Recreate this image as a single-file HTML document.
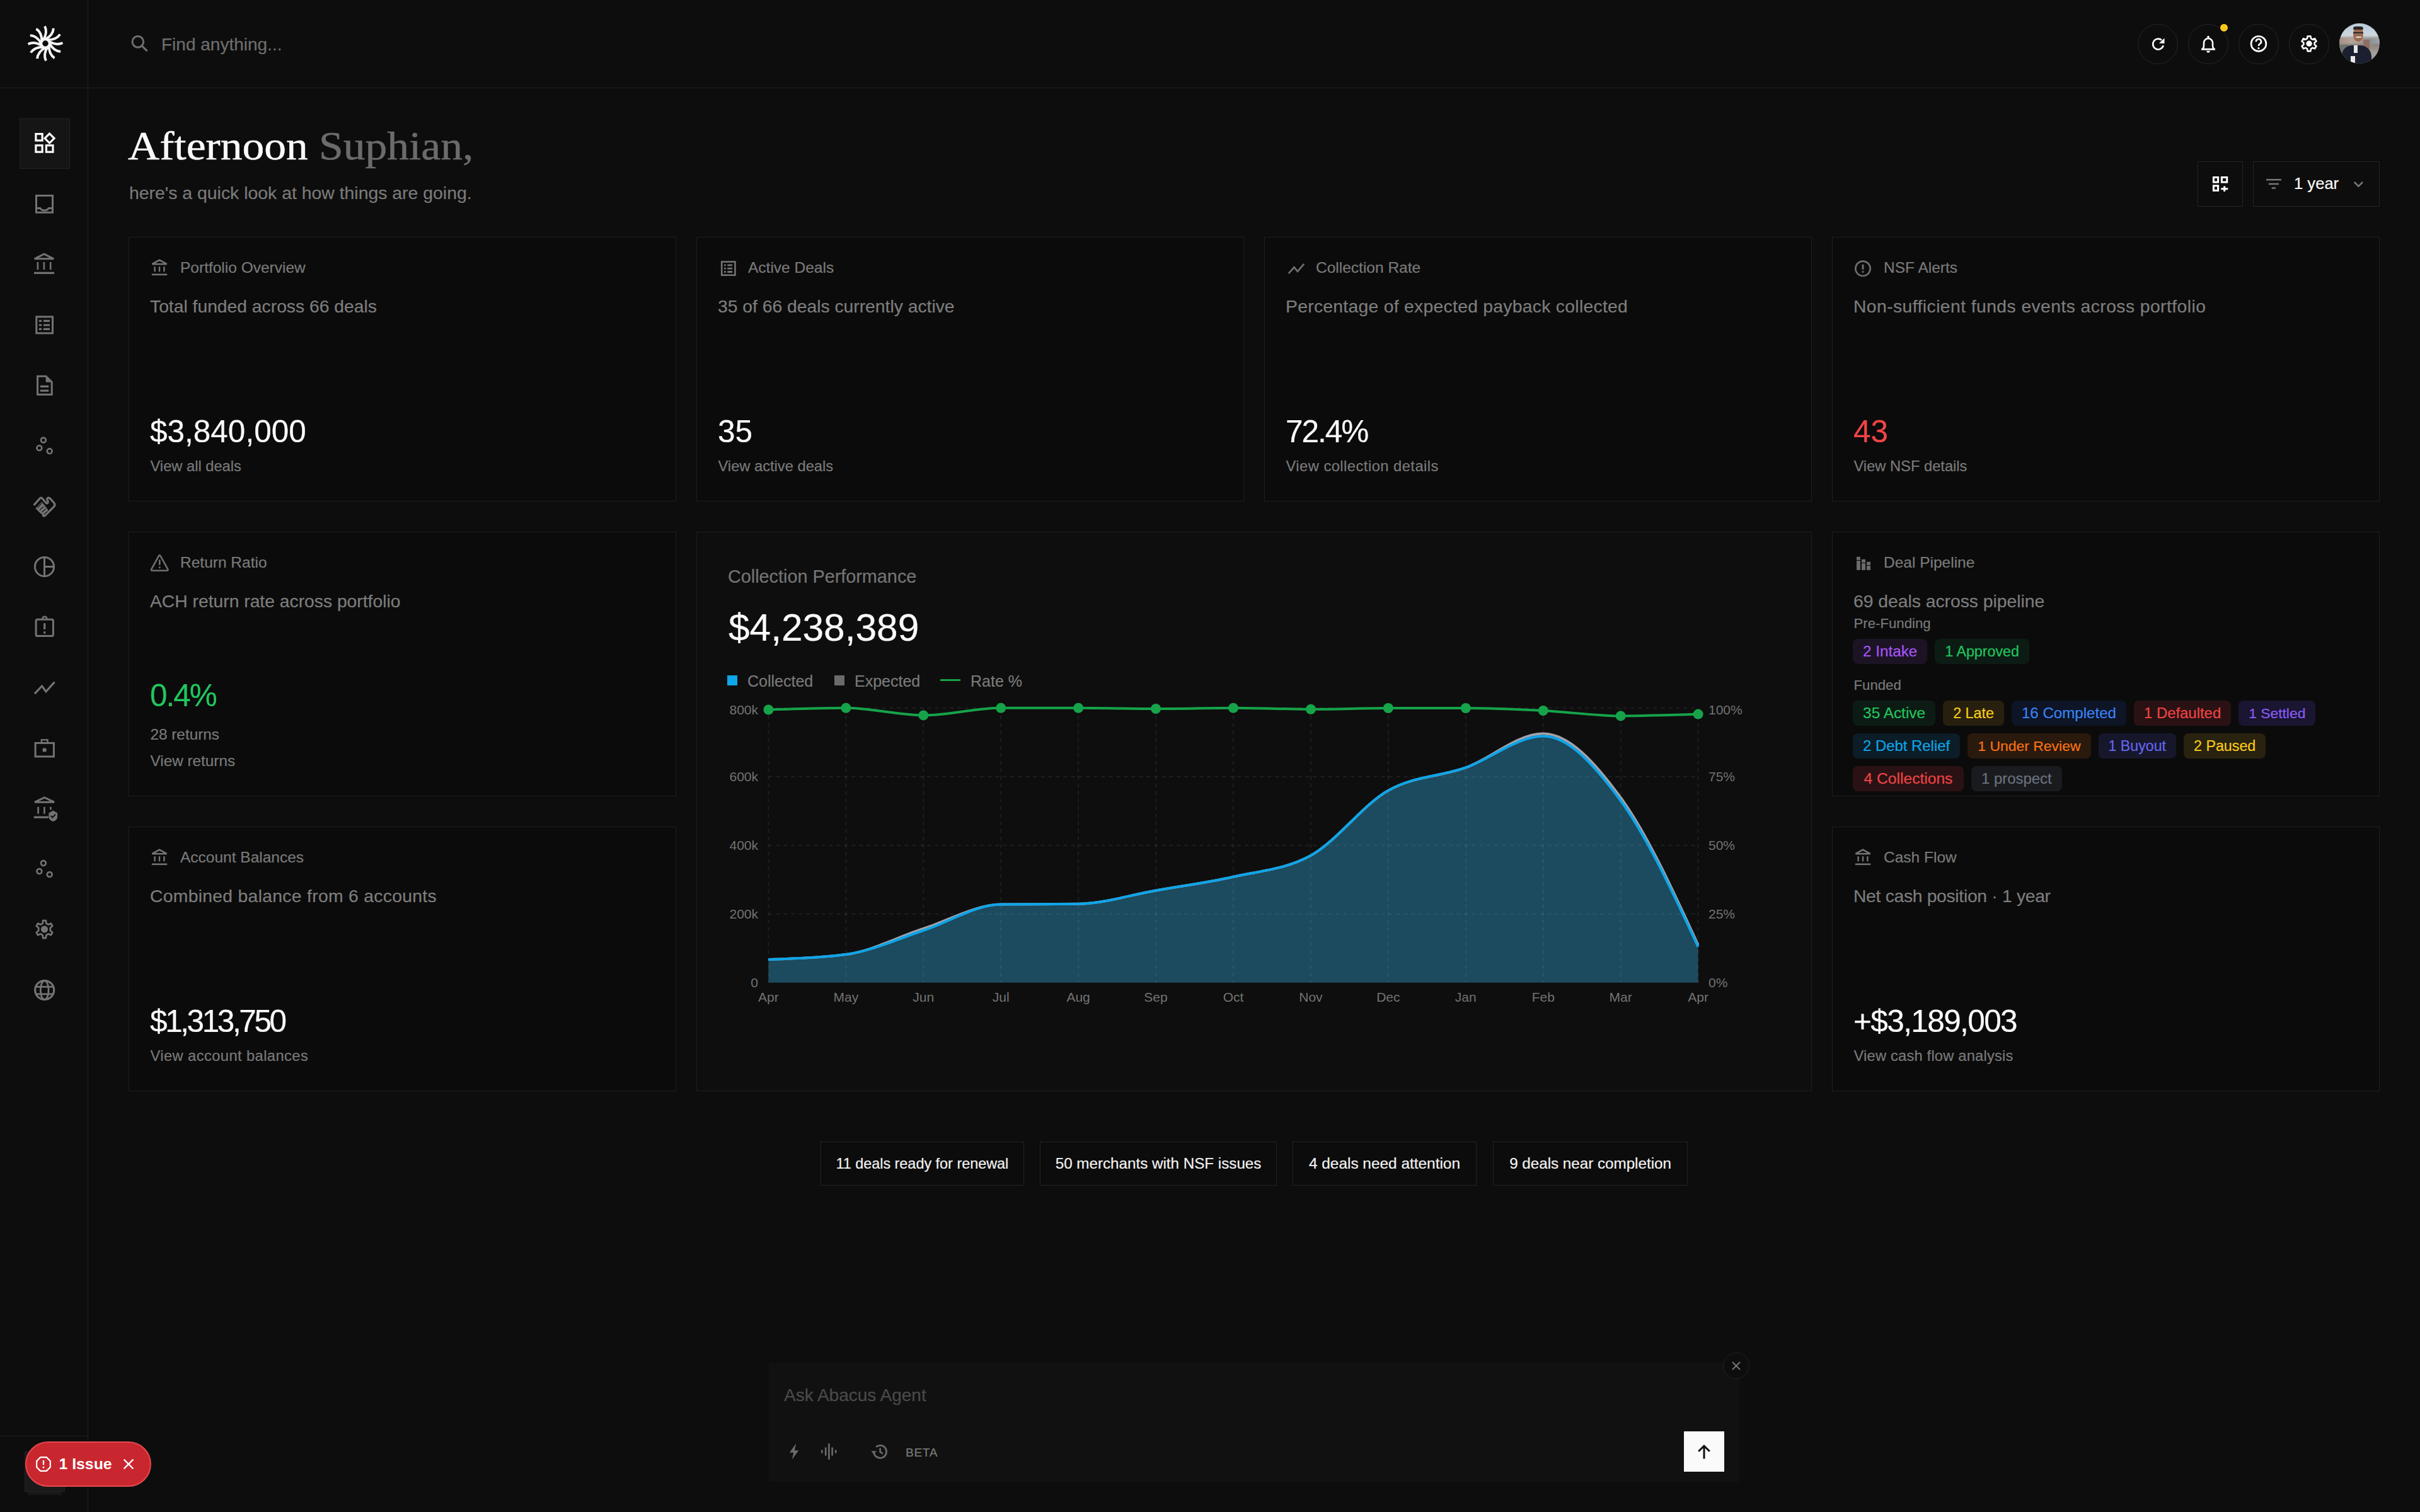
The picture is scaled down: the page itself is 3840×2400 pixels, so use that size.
<!DOCTYPE html>
<html><head><meta charset="utf-8">
<style>
html,body{margin:0;padding:0;background:#0d0d0d;overflow:hidden;}
body{width:3840px;height:2400px;}
#root{zoom:2;-webkit-text-stroke:0.1px currentColor;width:1920px;height:1200px;position:relative;overflow:hidden;background:#0d0d0d;font-family:"Liberation Sans",sans-serif;color:#fafafa;}
.abs{position:absolute;}
.vline{position:absolute;left:69.5px;top:0;width:0.5px;height:1200px;background:#1f1f1f;}
.hline{position:absolute;left:0;top:69.5px;width:1920px;height:0.5px;background:#1f1f1f;}
.t{position:absolute;white-space:nowrap;line-height:1;}
svg{position:absolute;overflow:visible;}
@media (max-width:2500px){html,body{width:1920px;height:1200px}body{width:1920px;height:1200px}#root{zoom:1}}
.side svg{left:27.75px;width:16px;height:16px;}
.hbtn{position:absolute;top:19px;width:31px;height:31px;border:0.5px solid #262626;border-radius:50%;}
.card{position:absolute;box-sizing:border-box;border:0.5px solid #1f1f1f;background:#0b0b0b;}
.card .ic{position:absolute;left:16px;top:15.5px;width:16px;height:16px;}
.lbl{position:absolute;left:40.5px;top:0;font-size:12.25px;color:#7a7a7a;white-space:nowrap;line-height:1;}
.desc{position:absolute;left:16.5px;font-size:14.14px;color:#7d7d7d;white-space:nowrap;line-height:1;}
.val{position:absolute;left:16.5px;font-size:24.75px;color:#fafafa;white-space:nowrap;line-height:1;}
.lnk{position:absolute;left:16.75px;font-size:11.85px;color:#7a7a7a;white-space:nowrap;line-height:1;}
.badge{display:inline-block;box-sizing:border-box;height:20px;line-height:20px;padding:0;text-align:center;border-radius:4px;font-size:12px;margin-right:6px;vertical-align:top;white-space:nowrap;}
.pill{position:absolute;top:906px;height:35px;box-sizing:border-box;border:0.5px solid #232323;color:#f2f2f2;line-height:34px;padding:0;text-align:center;white-space:nowrap;background:#0c0c0c;}
</style></head>
<body><div id="root">

<!-- SIDEBAR / HEADER LINES -->
<div class="vline"></div>
<div class="hline"></div>

<!-- LOGO -->
<svg id="logo" style="left:21.9px;top:20.6px;width:28px;height:28px" viewBox="-14 -14 28 28"><path d="M-1.65 -2.86Q1.96 -8.90 -0.48 -13.69M0.00 -3.30Q6.15 -6.73 6.43 -12.10M1.65 -2.86Q8.69 -2.75 11.62 -7.26M2.86 -1.65Q8.90 1.96 13.69 -0.48M3.30 0.00Q6.73 6.15 12.10 6.43M2.86 1.65Q2.75 8.69 7.26 11.62M1.65 2.86Q-1.96 8.90 0.48 13.69M-0.00 3.30Q-6.15 6.73 -6.43 12.10M-1.65 2.86Q-8.69 2.75 -11.62 7.26M-2.86 1.65Q-8.90 -1.96 -13.69 0.48M-3.30 0.00Q-6.73 -6.15 -12.10 -6.43M-2.86 -1.65Q-2.75 -8.69 -7.26 -11.62" fill="none" stroke="#f5f5f5" stroke-width="1.95"/><circle cx="0" cy="0" r="3.35" fill="none" stroke="#f5f5f5" stroke-width="2"/></svg>

<!-- SEARCH -->
<svg style="left:102px;top:26px;width:18px;height:18px" viewBox="0 0 18 18"><circle cx="7.4" cy="7.2" r="4.4" fill="none" stroke="#6e6e6e" stroke-width="1.5"/><line x1="10.6" y1="10.4" x2="14.8" y2="14.6" stroke="#6e6e6e" stroke-width="1.6"/></svg>
<div class="t" style="left:128px;top:28.5px;font-size:14px;color:#6e6e6e">Find anything...</div>

<!-- HEADER RIGHT -->
<div class="hbtn" style="left:1696px"></div>
<div class="hbtn" style="left:1736px"></div>
<div class="hbtn" style="left:1776px"></div>
<div class="hbtn" style="left:1816px"></div>
<svg style="left:1704px;top:27px;width:16px;height:16px" viewBox="0 0 16 16"><path d="M11 4.78A4.2 4.2 0 1 0 12.36 9.09" fill="none" stroke="#fff" stroke-width="1.3"/><path d="M9 7.3L13.25 3.25V7.5Z" fill="#fff"/></svg>
<svg style="left:1744px;top:27px;width:16px;height:16px" viewBox="0 0 16 16"><path d="M3.5 11.7Q4.5 10.9 4.5 9.2V7A3.5 3.5 0 0 1 11.5 7V9.2Q11.5 10.9 12.5 11.7" fill="none" stroke="#fff" stroke-width="1.3"/><path d="M2.5 12.1H13.5" stroke="#fff" stroke-width="1.4"/><circle cx="8" cy="2.3" r="0.9" fill="#fff"/><path d="M6.6 13.4H9.4A1.4 1.4 0 0 1 6.6 13.4Z" fill="#fff"/></svg>
<div class="abs" style="left:1761.3px;top:19.2px;width:6px;height:6px;border-radius:50%;background:#f8c91c"></div>
<svg style="left:1784px;top:27px;width:16px;height:16px" viewBox="0 0 16 16"><circle cx="7.97" cy="7.7" r="5.95" fill="none" stroke="#fff" stroke-width="1.35"/><path d="M5.9 6.1A2.05 2.05 0 1 1 8.8 7.9C8.1 8.3 7.95 8.7 7.95 9.5" fill="none" stroke="#fff" stroke-width="1.3"/><circle cx="7.95" cy="11.3" r="0.8" fill="#fff"/></svg>
<svg style="left:1824px;top:27px;width:16px;height:16px" viewBox="0 0 16 16"><path d="M6.85 1.75H9.15L9.55 3.6L10.75 4.3L12.55 3.7L13.7 5.7L12.3 6.95V8.35L13.7 9.6L12.55 11.6L10.75 11L9.55 11.7L9.15 13.55H6.85L6.45 11.7L5.25 11L3.45 11.6L2.3 9.6L3.7 8.35V6.95L2.3 5.7L3.45 3.7L5.25 4.3L6.45 3.6Z" fill="none" stroke="#fff" stroke-width="1.3" stroke-linejoin="miter"/><circle cx="8" cy="7.65" r="2.35" fill="#fff"/></svg>
<div class="abs" style="left:1856px;top:18.5px;width:32px;height:32px;border-radius:50%;overflow:hidden;background:linear-gradient(180deg,#b9cadb 0%,#cdd6dd 30%,#a9a29b 36%,#8f8680 55%,#a6a29c 75%,#8c8a86 100%)">
 <div class="abs" style="left:0;top:12px;width:32px;height:4px;background:linear-gradient(90deg,#a58f86,#b7a49b 30%,#9a9590 60%,#8e949c 80%,#9ca3aa)"></div>
 <div class="abs" style="left:19px;top:13px;width:5px;height:11px;background:#8f6f63"></div>
 <div class="abs" style="left:0;top:17px;width:7px;height:8px;background:#6f7470"></div>
 <div class="abs" style="left:2px;top:17.5px;width:23.5px;height:16px;border-radius:8px 9px 0 0;background:#1b2030"></div>
 <div class="abs" style="left:11.6px;top:17.5px;width:2.8px;height:6px;background:#e6e6e6"></div>
 <div class="abs" style="left:9px;top:26px;width:3.5px;height:6px;background:#e8e8e8"></div>
 <div class="abs" style="left:11.2px;top:3px;width:7.6px;height:11.6px;border-radius:45% 45% 50% 50%;background:#9c6a50"></div>
 <div class="abs" style="left:11px;top:2.6px;width:8px;height:2.6px;border-radius:4px 4px 1px 1px;background:#2b2522"></div>
 <div class="abs" style="left:11.2px;top:7px;width:7.6px;height:0.8px;background:#2a2a2a"></div>
 <div class="abs" style="left:12.8px;top:10.4px;width:4.6px;height:1.3px;border-radius:1px;background:#e8e0d8"></div>
</div>


<!-- SIDEBAR ICONS -->
<div class="abs" style="left:15.5px;top:94px;width:40px;height:40px;box-sizing:border-box;background:#151515;border:0.5px solid #222"></div>
<svg style="left:0;top:0;width:70px;height:1200px" viewBox="0 0 70 1200">
<g fill="none" stroke="#fafafa" stroke-width="1.6">
<rect x="28.45" y="106.3" width="5.1" height="5.2"/><rect x="28.45" y="115.4" width="5.1" height="5.2"/><rect x="36.7" y="115.4" width="5.3" height="5.2"/>
<path d="M39.3 106.05L43.05 109.8L39.3 113.55L35.55 109.8Z"/>
</g>
<g fill="none" stroke="#737373" stroke-width="1.5">
<path d="M28.75 155.25H41.75V168.6H28.75Z"/><path d="M28.75 165.2H31.8Q33 167 35.25 167Q37.5 167 38.7 165.2H41.75"/>
<path d="M27.4 205.4H42.6L35 201.6Z" stroke-linejoin="miter"/><path d="M29.95 208V214M34.95 208V214M40.1 208V214" stroke-width="1.3"/><path d="M27 216.65H43" stroke-width="1.6"/>
<rect x="28.9" y="251.4" width="12.85" height="13.05"/><path d="M34.45 254.7H39.5M34.45 258H39.5M34.45 261.2H39.5M30.95 254.7H33.05M30.95 258H33.05M30.95 261.2H33.05" stroke-width="1.6"/>
<path d="M29.8 298.6H36.5L41.1 303.2V313.15H29.8Z"/><path d="M36.3 298.2V303.4H41.5Z" fill="#737373" stroke="none"/><path d="M31.95 306.65H38.6M31.95 310.1H38.6" stroke-width="1.6"/>
<g stroke-width="1.35"><circle cx="34.45" cy="349.25" r="1.95"/><circle cx="31.2" cy="355.55" r="1.95"/><circle cx="39.35" cy="358.05" r="1.95"/></g>
<path d="M26.83 400.94 L31.43 395.78 Q32.42 394.46 33.58 395.61 L36.22 398.76 Q37.38 400.24 38.04 398.92 Q38.37 397.60 37.05 396.44" stroke-linecap="butt" stroke-linejoin="round" stroke-width="1.65"/><path d="M37.05 396.44 Q37.88 394.46 39.53 395.45 L43.00 399.25 Q43.99 400.57 42.84 402.06 L35.73 409.17 Q34.90 410.00 34.07 409.01 L33.74 408.68" stroke-linejoin="round" stroke-width="1.65"/><path d="M28.20 403.38 L33.25 398.26 L38.21 404.71 L35.23 409.50 L33.08 408.18 L31.10 406.53 L29.44 404.87 Z" fill="#737373" stroke="none"/><path d="M29.61 402.97 L33.41 399.17 M31.51 404.79 L34.49 402.06 M33.25 406.53 L36.22 403.88 M35.07 408.26 L37.38 406.03" stroke="#0d0d0d" stroke-width="0.55"/>
<circle cx="35.25" cy="449.8" r="7.55"/><path d="M35.25 442.25V457.35M35.25 449.8H42.8"/>
<rect x="28.55" y="491.6" width="13.65" height="13.2" rx="1.2"/><path d="M33.6 491.6Q33.6 489.4 35.4 489.4Q37.2 489.4 37.2 491.6" stroke-width="1.3"/><path d="M35.35 494.6V499.5" stroke-width="1.6"/><path d="M35.35 501.1V502.9" stroke-width="1.6"/>
<path d="M27.5 550.55L33.25 544.5L36.5 548.9L43.25 541.3" stroke-width="1.6"/>
<rect x="28.05" y="589.7" width="14.65" height="10.75"/><rect x="32.95" y="587.15" width="4.8" height="2.5" stroke-width="1.2"/>
<path d="M27.6 636.6H43L35.3 632.9Z"/><path d="M30.3 640.4V645.9M35.2 640.4V645.9M40.2 640.4V642.6" stroke-width="1.3"/><path d="M26.85 648.6H38.4" stroke-width="1.6"/>
<g stroke-width="1.35"><circle cx="34.45" cy="685" r="1.95"/><circle cx="31.2" cy="691.5" r="1.95"/><circle cx="39.35" cy="694" r="1.95"/></g>
<path d="M34.1 730.6H36.4L36.7 732.9L38.3 733.8L40.4 732.9L41.6 734.9L39.9 736.4V738.6L41.6 740.1L40.4 742.1L38.3 741.2L36.7 742.1L36.4 744.5H34.1L33.8 742.1L32.2 741.2L30.1 742.1L28.9 740.1L30.6 738.6V736.4L28.9 734.9L30.1 732.9L32.2 733.8L33.8 732.9Z" stroke-width="1.4" stroke-linejoin="round"/>
<circle cx="35.35" cy="785.8" r="7.5" stroke-width="1.6"/><ellipse cx="35.35" cy="785.8" rx="3.2" ry="7.5" stroke-width="1.4"/><path d="M28.2 783.15H42.5M28.2 788.9H42.5" stroke-width="1.4"/>
</g>
<g fill="#737373"><circle cx="35.3" cy="595.2" r="1.6"/><circle cx="35.25" cy="737.5" r="2.8"/>
<path d="M38.7 645.2L42.1 643.2L45.55 645.2V648.2Q45.55 650.9 42.1 652Q38.7 650.9 38.7 648.2Z"/></g>
<path d="M40.3 647.4L41.7 648.8L44 646.3" fill="none" stroke="#0d0d0d" stroke-width="0.9"/>
<path d="M0 1139.75H69.5" stroke="#1f1f1f" stroke-width="0.5"/>
</svg>
<div class="abs" style="left:22px;top:1183.8px;width:27px;height:2.6px;background:#181818"></div>
<div class="abs" style="left:19.5px;top:1152px;width:32px;height:32px;background:#1a1a1a;border:0.5px solid #222;box-sizing:border-box"></div>


<!-- GREETING -->
<div class="t" style="left:101.5px;top:96px;font-family:'Liberation Serif',serif;font-size:31.6px;color:#fafafa;line-height:40px;transform:scaleX(1.1);transform-origin:0 0;-webkit-text-stroke:0.25px currentColor">Afternoon <span style="color:#6b6b6b;-webkit-text-stroke:0.25px #6b6b6b">Suphian,</span></div>
<div class="t" style="left:102.5px;top:145px;font-size:14.2px;color:#7a7a7a;line-height:16px">here's a quick look at how things are going.</div>
<div class="abs" style="left:1743.5px;top:128px;width:36px;height:36px;box-sizing:border-box;border:0.5px solid #232323"></div>
<svg style="left:1753.5px;top:138px;width:16px;height:16px" viewBox="0 0 16 16"><g fill="none" stroke="#fff" stroke-width="1.5"><rect x="2.7" y="2.75" width="3.6" height="3.8"/><rect x="9.2" y="2.75" width="4.15" height="3.8"/><rect x="2.7" y="9.45" width="3.6" height="3.75"/><path d="M11.35 9.75V13.95M8.65 11.85H14.1"/></g></svg>
<div class="abs" style="left:1787.5px;top:128px;width:100.5px;height:36px;box-sizing:border-box;border:0.5px solid #232323"></div>
<svg style="left:1797px;top:138px;width:16px;height:16px" viewBox="0 0 16 16"><path d="M0.95 4.6H12.95M2.9 8H10.95M5.35 11.3H8.5" stroke="#767676" stroke-width="1.25"/></svg>
<div class="t" style="left:1820px;top:139.5px;font-size:12.8px;color:#fafafa">1 year</div>
<svg style="left:1864px;top:140px;width:12px;height:12px" viewBox="0 0 12 12"><path d="M3.9 4.5L7.2 7.8L10.5 4.5" fill="none" stroke="#767676" stroke-width="1.3"/></svg>


<!-- CARDS -->
<div class="card" style="left:102px;top:188px;width:434.5px;height:210px"><svg class="ic" viewBox="0 0 16 16"><g fill="none" stroke="#737373" stroke-width="1.3"><path d="M2.2 5.6H13.8L8 2.4Z" stroke-linejoin="miter"/><path d="M4.3 7.6V11.6M8 7.6V11.6M11.7 7.6V11.6" stroke-width="1.2"/><path d="M1.9 13.9H14.1" stroke-width="1.3"/></g></svg><div class="lbl" style="top:18.1px">Portfolio Overview</div><div class="desc" style="top:47.5px">Total funded across 66 deals</div><div class="val" style="top:141.4px;color:#fafafa">$3,840,000</div><div class="lnk" style="top:176px">View all deals</div></div>
<div class="card" style="left:552.5px;top:188px;width:434.5px;height:210px"><svg class="ic" viewBox="0 0 16 16"><g fill="none" stroke="#737373"><rect x="3.6" y="3.75" width="10.6" height="10.6" stroke-width="1.3"/><path d="M5.5 6.45H6.9M5.5 9.1H6.9M5.5 11.75H6.9M8.1 6.45H12.05M8.1 9.1H12.05M8.1 11.75H12.05" stroke-width="1.4"/></g></svg><div class="lbl" style="top:18.1px">Active Deals</div><div class="desc" style="top:47.5px">35 of 66 deals currently active</div><div class="val" style="top:141.4px;color:#fafafa">35</div><div class="lnk" style="top:176px">View active deals</div></div>
<div class="card" style="left:1003px;top:188px;width:434.5px;height:210px"><svg class="ic" viewBox="0 0 16 16"><path d="M2.85 13.05L7.25 8.1L10 11.4L15.1 5.45" fill="none" stroke="#6e6e6e" stroke-width="1.4"/></svg><div class="lbl" style="top:18.1px">Collection Rate</div><div class="desc" style="top:47.5px;letter-spacing:0.15px">Percentage of expected payback collected</div><div class="val" style="top:141.4px;color:#fafafa;letter-spacing:-1px">72.4%</div><div class="lnk" style="top:176px;letter-spacing:0.24px">View collection details</div></div>
<div class="card" style="left:1453.5px;top:188px;width:434.5px;height:210px"><svg class="ic" viewBox="0 0 16 16"><circle cx="8" cy="9.15" r="5.85" fill="none" stroke="#6e6e6e" stroke-width="1.3"/><path d="M8 5.9V9.9" stroke="#6e6e6e" stroke-width="1.5"/><rect x="7.3" y="11.05" width="1.4" height="1.4" fill="#6e6e6e"/></svg><div class="lbl" style="top:18.1px">NSF Alerts</div><div class="desc" style="top:47.5px;letter-spacing:0.22px">Non-sufficient funds events across portfolio</div><div class="val" style="top:141.4px;color:#ef4444">43</div><div class="lnk" style="top:176px">View NSF details</div></div>
<div class="card" style="left:102px;top:422px;width:434.5px;height:210px"><svg class="ic" viewBox="0 0 16 16"><path d="M7.42 3.36Q8.15 2.05 8.88 3.36L14.52 13.54Q15.25 14.85 13.75 14.85L2.50 14.85Q1.00 14.85 1.73 13.54Z" fill="none" stroke="#6e6e6e" stroke-width="1.3" stroke-linejoin="round"/><path d="M8.15 6.8V9.9" stroke="#6e6e6e" stroke-width="1.3" stroke-linecap="round"/><circle cx="8.15" cy="12.4" r="0.72" fill="#6e6e6e"/></svg><div class="lbl" style="top:18.1px">Return Ratio</div><div class="desc" style="top:47.5px">ACH return rate across portfolio</div><div class="val" style="top:117px;color:#22c55e;letter-spacing:-1px">0.4%</div><div class="lnk" style="top:154.5px;font-size:12.15px">28 returns</div><div class="lnk" style="top:175.5px;font-size:12.15px">View returns</div></div>
<div class="card" style="left:102px;top:656px;width:434.5px;height:210px"><svg class="ic" viewBox="0 0 16 16"><g fill="none" stroke="#737373" stroke-width="1.3"><path d="M2.2 5.6H13.8L8 2.4Z" stroke-linejoin="miter"/><path d="M4.3 7.6V11.6M8 7.6V11.6M11.7 7.6V11.6" stroke-width="1.2"/><path d="M1.9 13.9H14.1" stroke-width="1.3"/></g></svg><div class="lbl" style="top:18.1px">Account Balances</div><div class="desc" style="top:47.5px;letter-spacing:0.16px">Combined balance from 6 accounts</div><div class="val" style="top:141.4px;color:#fafafa;letter-spacing:-1.7px">$1,313,750</div><div class="lnk" style="top:176px;letter-spacing:0.21px">View account balances</div></div>
<div class="card" style="left:1453.5px;top:656px;width:434.5px;height:210px"><svg class="ic" viewBox="0 0 16 16"><g fill="none" stroke="#737373" stroke-width="1.3"><path d="M2.2 5.6H13.8L8 2.4Z" stroke-linejoin="miter"/><path d="M4.3 7.6V11.6M8 7.6V11.6M11.7 7.6V11.6" stroke-width="1.2"/><path d="M1.9 13.9H14.1" stroke-width="1.3"/></g></svg><div class="lbl" style="top:18.1px">Cash Flow</div><div class="desc" style="top:47.5px;letter-spacing:-0.15px">Net cash position &middot; 1 year</div><div class="val" style="top:141.4px;color:#fafafa;letter-spacing:-0.8px">+$3,189,003</div><div class="lnk" style="top:176px;letter-spacing:0.1px">View cash flow analysis</div></div>
<div class="card" style="left:1453.5px;top:422px;width:434.5px;height:210px"><svg class="ic" viewBox="0 0 16 16"><g fill="#6b6b6b"><rect x="3" y="3.9" width="2.95" height="2.6"/><rect x="3" y="7" width="2.95" height="7.45"/><rect x="7" y="5.9" width="3" height="2.6"/><rect x="7" y="9" width="3" height="5.45"/><rect x="11" y="7.9" width="3" height="2.6"/><rect x="11" y="11" width="3" height="3.45"/></g></svg><div class="lbl" style="top:18.1px">Deal Pipeline</div><div class="desc" style="top:47.5px">69 deals across pipeline</div><div class="lnk" style="top:67px;font-size:11.1px">Pre-Funding</div><div class="abs" style="left:16px;top:84.6px;width:420px"><span class="badge" style="color:#a855f7;background:#1c1424;width:59.15px;font-size:12.13px">2 Intake</span><span class="badge" style="color:#22c55e;background:#0c1c14;width:74.8px;font-size:11.62px">1 Approved</span></div><div class="lnk" style="top:116px;font-size:11.1px">Funded</div><div class="abs" style="left:16px;top:133.4px;width:420px;line-height:0"><span class="badge" style="color:#22c55e;background:#0c1c14;width:65.6px;font-size:12.2px">35 Active</span><span class="badge" style="color:#facc15;background:#28200f;width:48.4px;font-size:11.65px">2 Late</span><span class="badge" style="color:#3b82f6;background:#0d1526;width:91px;font-size:12.05px">16 Completed</span><span class="badge" style="color:#ef4444;background:#2a1214;width:77.1px;font-size:11.95px">1 Defaulted</span><span class="badge" style="color:#8b5cf6;background:#1a1530;width:61.1px;font-size:11.43px">1 Settled</span><div style="height:6px"></div><span class="badge" style="color:#0ea5e9;background:#0b1d27;width:85.1px;font-size:11.95px">2 Debt Relief</span><span class="badge" style="color:#f97316;background:#2a190d;width:97.7px;font-size:11.48px">1 Under Review</span><span class="badge" style="color:#6366f1;background:#17172c;width:61.7px;font-size:11.58px">1 Buyout</span><span class="badge" style="color:#facc15;background:#28220f;width:65.2px;font-size:11.64px">2 Paused</span><div style="height:6px"></div><span class="badge" style="color:#ef4444;background:#2a1214;width:88px;font-size:12.3px">4 Collections</span><span class="badge" style="color:#6b7280;background:#1a1b1e;width:71.8px;font-size:11.95px">1 prospect</span></div></div>
<div class="card" style="left:552.5px;top:422px;width:885px;height:444px;background:#0e0e0e"><div class="t" style="left:24.5px;top:27.75px;font-size:14.4px;color:#757575">Collection Performance</div>
<div class="t" style="left:25px;top:60.5px;font-size:30.2px;color:#fafafa">$4,238,389</div>
<div class="abs" style="left:24px;top:113.7px;width:8px;height:8px;background:#0ea5e9"></div>
<div class="t" style="left:40px;top:112px;font-size:12.5px;color:#7a7a7a">Collected</div>
<div class="abs" style="left:108.75px;top:113.7px;width:8px;height:8px;background:#6b6b6b"></div>
<div class="t" style="left:125px;top:112px;font-size:12.5px;color:#7a7a7a">Expected</div>
<div class="abs" style="left:193px;top:116.6px;width:16px;height:1.5px;background:#16a34a"></div>
<div class="t" style="left:217px;top:112px;font-size:12.5px;color:#7a7a7a">Rate %</div>
<svg style="left:-0.25px;top:-0.4px;width:885px;height:444px" viewBox="0 0 885 444">
<path d="M56.70,339.50 C77.19,338.83 97.68,338.17 118.17,335.50 C138.66,332.83 159.14,323.12 179.63,316.50 C200.12,309.88 220.61,296.10 241.10,295.80 C261.59,295.50 282.08,295.65 302.57,295.35 C323.06,295.05 343.54,288.33 364.03,284.75 C384.52,281.17 405.01,278.48 425.50,273.85 C445.99,269.23 466.48,268.23 486.97,257.00 C507.46,245.77 527.94,217.03 548.43,205.40 C568.92,193.77 589.41,194.38 609.90,187.20 C630.39,180.02 650.88,162.30 671.37,162.30 C691.86,162.30 712.34,185.63 732.83,213.50 C753.32,241.37 773.81,285.43 794.30,329.50 L794.30,357.85 L56.70,357.85 Z" fill="#1c4a5e"/>
<g><path d="M56.7 303.36H794.3" stroke="#fff" stroke-opacity="0.075" stroke-width="1" stroke-dasharray="3 3"/><path d="M56.7 248.88H794.3" stroke="#fff" stroke-opacity="0.075" stroke-width="1" stroke-dasharray="3 3"/><path d="M56.7 194.39H794.3" stroke="#fff" stroke-opacity="0.075" stroke-width="1" stroke-dasharray="3 3"/><path d="M56.7 139.90H794.3" stroke="#fff" stroke-opacity="0.075" stroke-width="1" stroke-dasharray="3 3"/><path d="M56.70 139.9V357.85" stroke="#fff" stroke-opacity="0.075" stroke-width="1" stroke-dasharray="3 3"/><path d="M118.17 139.9V357.85" stroke="#fff" stroke-opacity="0.075" stroke-width="1" stroke-dasharray="3 3"/><path d="M179.63 139.9V357.85" stroke="#fff" stroke-opacity="0.075" stroke-width="1" stroke-dasharray="3 3"/><path d="M241.10 139.9V357.85" stroke="#fff" stroke-opacity="0.075" stroke-width="1" stroke-dasharray="3 3"/><path d="M302.57 139.9V357.85" stroke="#fff" stroke-opacity="0.075" stroke-width="1" stroke-dasharray="3 3"/><path d="M364.03 139.9V357.85" stroke="#fff" stroke-opacity="0.075" stroke-width="1" stroke-dasharray="3 3"/><path d="M425.50 139.9V357.85" stroke="#fff" stroke-opacity="0.075" stroke-width="1" stroke-dasharray="3 3"/><path d="M486.97 139.9V357.85" stroke="#fff" stroke-opacity="0.075" stroke-width="1" stroke-dasharray="3 3"/><path d="M548.43 139.9V357.85" stroke="#fff" stroke-opacity="0.075" stroke-width="1" stroke-dasharray="3 3"/><path d="M609.90 139.9V357.85" stroke="#fff" stroke-opacity="0.075" stroke-width="1" stroke-dasharray="3 3"/><path d="M671.37 139.9V357.85" stroke="#fff" stroke-opacity="0.075" stroke-width="1" stroke-dasharray="3 3"/><path d="M732.83 139.9V357.85" stroke="#fff" stroke-opacity="0.075" stroke-width="1" stroke-dasharray="3 3"/><path d="M794.30 139.9V357.85" stroke="#fff" stroke-opacity="0.075" stroke-width="1" stroke-dasharray="3 3"/></g>
<path d="M56.70,339.50 C77.19,338.83 97.68,338.17 118.17,335.50 C138.66,332.83 159.14,321.62 179.63,315.00 C200.12,308.38 220.61,296.10 241.10,295.80 C261.59,295.50 282.08,295.65 302.57,295.35 C323.06,295.05 343.54,288.33 364.03,284.75 C384.52,281.17 405.01,278.48 425.50,273.85 C445.99,269.23 466.48,268.23 486.97,257.00 C507.46,245.77 527.94,217.03 548.43,205.40 C568.92,193.77 589.41,194.72 609.90,187.20 C630.39,179.68 650.88,160.30 671.37,160.30 C691.86,160.30 712.34,183.05 732.83,211.00 C753.32,238.95 773.81,283.48 794.30,328.00" fill="none" stroke="#a1a1aa" stroke-width="2"/>
<path d="M56.70,339.50 C77.19,338.83 97.68,338.17 118.17,335.50 C138.66,332.83 159.14,323.12 179.63,316.50 C200.12,309.88 220.61,296.10 241.10,295.80 C261.59,295.50 282.08,295.65 302.57,295.35 C323.06,295.05 343.54,288.33 364.03,284.75 C384.52,281.17 405.01,278.48 425.50,273.85 C445.99,269.23 466.48,268.23 486.97,257.00 C507.46,245.77 527.94,217.03 548.43,205.40 C568.92,193.77 589.41,194.38 609.90,187.20 C630.39,180.02 650.88,162.30 671.37,162.30 C691.86,162.30 712.34,185.63 732.83,213.50 C753.32,241.37 773.81,285.43 794.30,329.50" fill="none" stroke="#0ea5e9" stroke-width="2"/>
<path d="M56.70,141.25 C77.19,140.57 97.68,139.90 118.17,139.90 C138.66,139.90 159.14,145.70 179.63,145.70 C200.12,145.70 220.61,139.90 241.10,139.90 C261.59,139.90 282.08,139.90 302.57,139.90 C323.06,139.90 343.54,140.50 364.03,140.50 C384.52,140.50 405.01,139.90 425.50,139.90 C445.99,139.90 466.48,140.90 486.97,140.90 C507.46,140.90 527.94,140.00 548.43,140.00 C568.92,140.00 589.41,140.00 609.90,140.00 C630.39,140.00 650.88,140.97 671.37,142.00 C691.86,143.03 712.34,146.20 732.83,146.20 C753.32,146.20 773.81,145.50 794.30,144.80" fill="none" stroke="#16a34a" stroke-width="2"/>
<g fill="#16a34a"><circle cx="56.70" cy="141.25" r="4"/><circle cx="118.17" cy="139.90" r="4"/><circle cx="179.63" cy="145.70" r="4"/><circle cx="241.10" cy="139.90" r="4"/><circle cx="302.57" cy="139.90" r="4"/><circle cx="364.03" cy="140.50" r="4"/><circle cx="425.50" cy="139.90" r="4"/><circle cx="486.97" cy="140.90" r="4"/><circle cx="548.43" cy="140.00" r="4"/><circle cx="609.90" cy="140.00" r="4"/><circle cx="671.37" cy="142.00" r="4"/><circle cx="732.83" cy="146.20" r="4"/><circle cx="794.30" cy="144.80" r="4"/></g>
<g font-family="Liberation Sans" font-size="10.5" fill="#737373"><text x="48.5" y="361.45" text-anchor="end">0</text><text x="802.5" y="361.45">0%</text><text x="48.5" y="306.96" text-anchor="end">200k</text><text x="802.5" y="306.96">25%</text><text x="48.5" y="252.48" text-anchor="end">400k</text><text x="802.5" y="252.48">50%</text><text x="48.5" y="197.99" text-anchor="end">600k</text><text x="802.5" y="197.99">75%</text><text x="48.5" y="144.80" text-anchor="end">800k</text><text x="802.5" y="144.80">100%</text><text x="56.70" y="373" text-anchor="middle">Apr</text><text x="118.17" y="373" text-anchor="middle">May</text><text x="179.63" y="373" text-anchor="middle">Jun</text><text x="241.10" y="373" text-anchor="middle">Jul</text><text x="302.57" y="373" text-anchor="middle">Aug</text><text x="364.03" y="373" text-anchor="middle">Sep</text><text x="425.50" y="373" text-anchor="middle">Oct</text><text x="486.97" y="373" text-anchor="middle">Nov</text><text x="548.43" y="373" text-anchor="middle">Dec</text><text x="609.90" y="373" text-anchor="middle">Jan</text><text x="671.37" y="373" text-anchor="middle">Feb</text><text x="732.83" y="373" text-anchor="middle">Mar</text><text x="794.30" y="373" text-anchor="middle">Apr</text></g>
</svg></div>


<!-- PILLS -->
<div class="pill" style="left:650.85px;width:161.65px;font-size:11.7px">11 deals ready for renewal</div>
<div class="pill" style="left:824.85px;width:188.4px;font-size:12.1px">50 merchants with NSF issues</div>
<div class="pill" style="left:1025.25px;width:146.45px;font-size:12.2px">4 deals need attention</div>
<div class="pill" style="left:1184.3px;width:154.95px;font-size:12.1px">9 deals near completion</div>


<!-- AGENT -->
<div class="abs" style="left:610px;top:1081.5px;width:770px;height:94.5px;background:#111111"></div>
<div class="t" style="left:622px;top:1100.5px;font-size:14px;color:#4a4a4a">Ask Abacus Agent</div>
<svg style="left:622px;top:1144px;width:16px;height:16px" viewBox="0 0 16 16"><path d="M9.6 1.6L4.4 8.9H7.6L6.4 14.4L11.6 7.1H8.4Z" fill="#6b6b6b"/></svg>
<svg style="left:649.5px;top:1144px;width:16px;height:16px" viewBox="0 0 16 16"><path d="M2.6 6.8V9.2M5.6 4.8V11.2M8.2 1.6V14.4M10.8 4.8V11.2M13.6 6.8V9.2" stroke="#6b6b6b" stroke-width="1.3"/></svg>
<svg style="left:689.75px;top:1144px;width:16px;height:16px" viewBox="0 0 16 16"><path d="M3.3 8.2A5 5 0 1 0 5 4.4" fill="none" stroke="#6b6b6b" stroke-width="1.4"/><path d="M1.2 7.6H5.4L3.3 10.3Z" fill="#6b6b6b"/><path d="M8.3 5.3V8.3L10.4 9.7" fill="none" stroke="#6b6b6b" stroke-width="1.3"/></svg>
<div class="t" style="left:718.5px;top:1147.75px;font-size:9.6px;color:#7a7a7a;letter-spacing:0.3px">BETA</div>
<div class="abs" style="left:1336px;top:1135.75px;width:32px;height:32.25px;background:#fafafa"></div>
<svg style="left:1344px;top:1144.6px;width:16px;height:16px" viewBox="0 0 16 16"><path d="M8 13.2V3.3M3.6 7.4L8 3L12.4 7.4" fill="none" stroke="#111" stroke-width="1.5"/></svg>
<div class="abs" style="left:1366.8px;top:1073.35px;width:21px;height:21px;box-sizing:border-box;border-radius:50%;border:0.5px solid #222;background:#0d0d0d"></div>
<svg style="left:1371.3px;top:1077.85px;width:12px;height:12px" viewBox="0 0 12 12"><path d="M3 3L9 9M9 3L3 9" stroke="#777" stroke-width="0.95"/></svg>


<!-- ISSUE -->
<div class="abs" style="left:20px;top:1144px;width:100px;height:36px;box-sizing:border-box;border-radius:18px;background:#c9272f;border:1px solid #e5484d"></div>
<svg style="left:27.5px;top:1155px;width:14px;height:14px" viewBox="0 0 14 14"><path d="M4.6 1.6H9.4L12.4 4.6V9.4L9.4 12.4H4.6L1.6 9.4V4.6Z" fill="none" stroke="#fff" stroke-width="1.1"/><path d="M7 4V7.6" stroke="#fff" stroke-width="1.2"/><circle cx="7" cy="9.6" r="0.7" fill="#fff"/></svg>
<div class="t" style="left:46.75px;top:1156px;font-size:12.4px;font-weight:bold;color:#fff;-webkit-text-stroke:0">1 Issue</div>
<svg style="left:96px;top:1156px;width:12px;height:12px" viewBox="0 0 12 12"><path d="M2.3 2.3L9.7 9.7M9.7 2.3L2.3 9.7" stroke="#fff" stroke-width="1.1"/></svg>


</div></body></html>
